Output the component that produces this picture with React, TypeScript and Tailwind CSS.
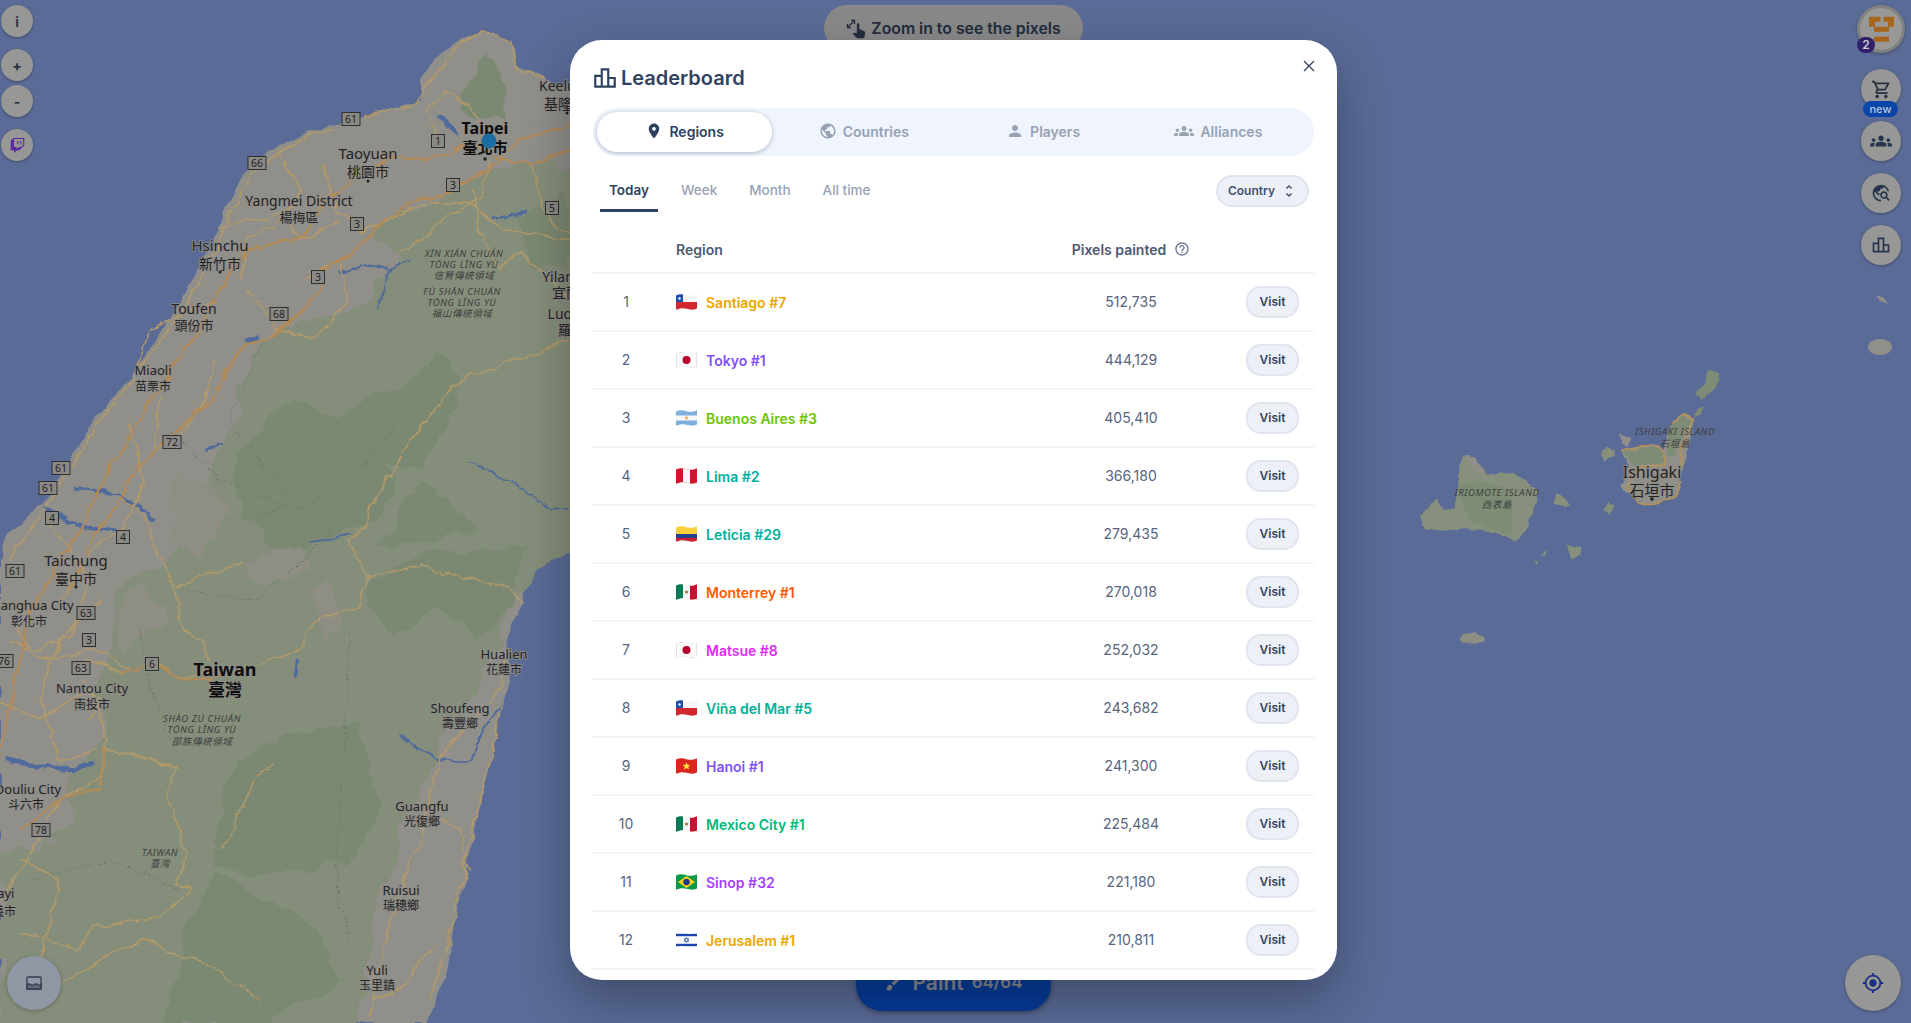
import React, { useId } from "react";
import {
  MdBrush,
  MdGroups,
  MdLocationOn,
  MdMyLocation,
  MdOutlineHelpOutline,
  MdOutlineLeaderboard,
  MdOutlineShoppingCart,
  MdPerson,
  MdPinch,
  MdPublic,
  MdTravelExplore,
  MdUnfoldMore,
} from "react-icons/md";
import { FaTwitch } from "react-icons/fa";

const rows = [
  { rank: 1, flag: "cl", name: "Santiago #7", color: "text-[#eda600]", pixels: "512,735" },
  { rank: 2, flag: "jp", name: "Tokyo #1", color: "text-[#8050fa]", pixels: "444,129" },
  { rank: 3, flag: "ar", name: "Buenos Aires #3", color: "text-[#6bc400]", pixels: "405,410" },
  { rank: 4, flag: "pe", name: "Lima #2", color: "text-[#00b09b]", pixels: "366,180" },
  { rank: 5, flag: "co", name: "Leticia #29", color: "text-[#00b09b]", pixels: "279,435" },
  { rank: 6, flag: "mx", name: "Monterrey #1", color: "text-[#ff5a00]", pixels: "270,018" },
  { rank: 7, flag: "jp", name: "Matsue #8", color: "text-[#e12afb]", pixels: "252,032" },
  { rank: 8, flag: "cl", name: "Viña del Mar #5", color: "text-[#00b09b]", pixels: "243,682" },
  { rank: 9, flag: "vn", name: "Hanoi #1", color: "text-[#8050fa]", pixels: "241,300" },
  { rank: 10, flag: "mx", name: "Mexico City #1", color: "text-[#00b877]", pixels: "225,484" },
  { rank: 11, flag: "br", name: "Sinop #32", color: "text-[#a63fff]", pixels: "221,180" },
  { rank: 12, flag: "il", name: "Jerusalem #1", color: "text-[#eda600]", pixels: "210,811" },
];

function Flag({ code }: { code: string }) {
  const id = useId();
  return (
    <svg viewBox="0 0 21 16" className="h-4 w-[21px] shrink-0">
      <defs>
        <clipPath id={id}>
          <path d="M0 1.5C4-.2 7 .2 10.5 1.2S17 2 21 .2V14.5C17 16.2 14 15.8 10.5 14.8S4 14 0 15.8Z" />
        </clipPath>
      </defs>
      <g clipPath={`url(#${id})`}>
        {code === "cl" && (
          <>
            <rect width="21" height="8" fill="#f4f4f4" />
            <rect y="8" width="21" height="8" fill="#d0282e" />
            <rect width="7" height="8" fill="#1c4fa8" />
            <circle cx="3.5" cy="4.5" r="1.2" fill="#fff" />
          </>
        )}
        {code === "jp" && (
          <>
            <rect width="21" height="16" fill="#d6d6d6" />
            <rect x=".6" y="1" width="19.8" height="14" fill="#fbfbfb" />
            <circle cx="10.5" cy="8" r="4" fill="#b8002a" />
          </>
        )}
        {code === "ar" && (
          <>
            <rect width="21" height="16" fill="#7eb0de" />
            <rect y="5.5" width="21" height="5" fill="#f7f7f7" />
            <circle cx="10.5" cy="8" r="1.4" fill="#f2a93b" />
          </>
        )}
        {code === "pe" && (
          <>
            <rect width="21" height="16" fill="#d3142c" />
            <rect x="7" width="7" height="16" fill="#f8f8f8" />
          </>
        )}
        {code === "co" && (
          <>
            <rect width="21" height="8" fill="#f7cf3b" />
            <rect y="8" width="21" height="4" fill="#23408f" />
            <rect y="12" width="21" height="4" fill="#c9202f" />
          </>
        )}
        {code === "mx" && (
          <>
            <rect width="7" height="16" fill="#0b7a52" />
            <rect x="7" width="7" height="16" fill="#f6f6f6" />
            <rect x="14" width="7" height="16" fill="#c5122f" />
            <circle cx="10.5" cy="8" r="1.6" fill="#8f7a45" />
          </>
        )}
        {code === "vn" && (
          <>
            <rect width="21" height="16" fill="#d9251d" />
            <path d="M10.5 4.2l1.1 2.6 2.8.2-2.1 1.8.7 2.7-2.5-1.5-2.5 1.5.7-2.7L6.6 7l2.8-.2Z" fill="#ffe234" />
          </>
        )}
        {code === "br" && (
          <>
            <rect width="21" height="16" fill="#0d9a46" />
            <path d="M10.5 2L19 8l-8.5 6L2 8Z" fill="#f7d21e" />
            <circle cx="10.5" cy="8" r="3.2" fill="#1b3a8a" />
          </>
        )}
        {code === "il" && (
          <>
            <rect width="21" height="16" fill="#f8f8f8" />
            <rect y="1.8" width="21" height="2.4" fill="#1f45b0" />
            <rect y="11.8" width="21" height="2.4" fill="#1f45b0" />
            <path d="M10.5 5.4l2.3 3.9h-4.6ZM10.5 10.6l-2.3-3.9h4.6Z" fill="none" stroke="#1f45b0" strokeWidth=".6" />
          </>
        )}
      </g>
    </svg>
  );
}

const labelFont = "'Noto Sans','Noto Sans CJK TC',sans-serif";

type Lbl = [number, number, string, number?, string?];

const labels: Lbl[] = [
  [485, 134, "Taipei", 16, "b"],
  [485, 153, "臺北市", 15, "b"],
  [566, 91, "Keelung", 14],
  [565, 109, "基隆市", 14],
  [368, 159, "Taoyuan", 15],
  [368, 177, "桃園市", 14],
  [299, 206, "Yangmei District", 14],
  [299, 222, "楊梅區", 13],
  [220, 251, "Hsinchu", 15],
  [220, 269, "新竹市", 14],
  [194, 314, "Toufen", 14],
  [194, 330, "頭份市", 13],
  [558, 282, "Yilan", 14],
  [573, 298, "宜蘭市", 14],
  [577, 319, "Luodong", 14],
  [579, 335, "羅東鎮", 14],
  [153, 375, "Miaoli", 13],
  [153, 391, "苗栗市", 12],
  [76, 566, "Taichung", 15],
  [76, 584, "臺中市", 14],
  [29, 610, "Changhua City", 13],
  [29, 626, "彰化市", 12],
  [225, 676, "Taiwan", 18, "b"],
  [225, 696, "臺灣", 17, "b"],
  [92, 693, "Nantou City", 13],
  [92, 709, "南投市", 12],
  [504, 659, "Hualien", 13],
  [504, 674, "花蓮市", 12],
  [460, 713, "Shoufeng", 13],
  [460, 728, "壽豐鄉", 12],
  [28, 794, "Douliu City", 13],
  [26, 809, "斗六市", 12],
  [422, 811, "Guangfu", 13],
  [422, 826, "光復鄉", 12],
  [401, 895, "Ruisui", 13],
  [401, 910, "瑞穗鄉", 12],
  [377, 975, "Yuli", 13],
  [377, 990, "玉里鎮", 12],
  [-4, 898, "Chiayi", 13],
  [-2, 916, "嘉義市", 12],
  [1652, 478, "Ishigaki", 16],
  [1652, 496, "石垣市", 15],
];

const areaLabels: Lbl[] = [
  [464, 257, "XĪN XIÁN CHUÁN"],
  [464, 268, "TŌNG LǏNG YÙ"],
  [464, 279, "信賢傳統領域"],
  [462, 295, "FÙ SHĀN CHUÁN"],
  [462, 306, "TŌNG LǏNG YÙ"],
  [462, 317, "福山傳統領域"],
  [202, 722, "SHÀO ZÚ CHUÁN"],
  [202, 733, "TŌNG LǏNG YÙ"],
  [202, 745, "邵族傳統領域"],
  [160, 856, "TAIWAN"],
  [160, 867, "臺灣"],
  [1497, 496, "IRIOMOTE ISLAND"],
  [1497, 508, "西表島"],
  [1675, 435, "ISHIGAKI ISLAND"],
  [1675, 447, "石垣島"],
];

const shields: [number, number, string][] = [
  [351, 119, "61"],
  [257, 163, "66"],
  [438, 141, "1"],
  [453, 185, "3"],
  [552, 208, "5"],
  [357, 224, "3"],
  [318, 277, "3"],
  [279, 314, "68"],
  [172, 442, "72"],
  [61, 468, "61"],
  [48, 488, "61"],
  [52, 518, "4"],
  [123, 537, "4"],
  [15, 571, "61"],
  [86, 613, "63"],
  [89, 640, "3"],
  [4, 661, "76"],
  [81, 668, "63"],
  [152, 664, "6"],
  [41, 830, "78"],
];

const lightRoads = [
  "364,117 410,103 440,70 460,42 490,31 513,48 517,66 545,80",
  "330,125 280,150 248,180 222,230 195,290 165,340 135,370 95,430 50,500 10,560",
  "568,340 452,384 397,462 350,545 368,577 419,566 510,588 524,601",
  "368,577 357,606 313,619 299,649 262,667 226,671 175,675 153,664 124,675 87,658",
  "175,588 182,636 204,640 208,662",
  "244,564 197,577 175,588 160,555 150,520 120,500",
  "104,749 175,769 167,802 186,850 175,884 193,889 157,919 98,924 76,950 22,932",
  "503,706 481,797 466,863 452,928 430,1000",
  "510,645 499,688 441,758 422,828 379,958 371,1019",
  "323,165 340,210 360,230 400,215 440,200 470,205 500,230 570,240",
  "300,280 340,260 350,300 310,340 280,330 250,290",
  "218,227 280,215 300,240 340,220",
  "100,600 60,640 40,700 60,760 100,749",
  "0,700 40,720 90,690 105,740 100,780 60,800 40,840 0,900",
  "473,190 480,230 500,270 520,250 570,300",
  "40,1000 100,960 140,940 200,960 260,1000",
  "430,950 400,990 372,1000",
  "440,140 425,110 445,90 470,105 480,125",
  "490,160 480,200 450,215 420,240 400,250",
  "530,165 545,210 570,235",
  "275,150 300,190 280,220 250,240 240,280",
  "135,370 150,330 190,310 220,300",
  "130,420 145,480 120,530 85,560 60,600",
  "50,520 90,580 70,640 30,650 10,620",
  "160,400 155,450 175,440 205,400 215,360",
  "10,640 50,660 95,650 130,670",
  "88,720 100,700 80,680",
  "20,860 60,880 40,960 15,1000",
  "225,850 250,790 270,760",
  "440,820 460,830 470,870",
];

const mainRoads = [
  "570,150 530,165 500,155 470,145 430,158 385,160 350,180 330,200 300,238 250,250 225,280 205,320 170,370 140,420 110,470 85,520 60,560 30,610 10,700 0,760",
  "570,125 520,140 480,175 440,195 410,205 380,222 350,255 323,270 322,290 280,330 240,350 210,400 150,455 100,530 70,590",
  "124,675 150,665 175,675 208,680 226,671",
  "104,749 100,790 60,800 20,830",
];

const rivers: [string, number][] = [
  ["7,762 55,769 95,765", 4],
  ["73,488 117,495 157,519", 3],
  ["42,508 87,527 117,530", 3],
  ["397,736 437,760 466,758 503,706", 2.5],
  ["310,542 350,534", 2.5],
  ["293,675 295,658", 4],
  ["437,118 459,133", 4],
  ["492,220 510,213 528,213", 3],
  ["340,273 365,268 386,272", 2.5],
  ["260,335 245,345", 4],
  ["470,462 500,475 528,492 545,505 568,508", 1.5],
  ["205,450 225,440", 3],
  ["410,260 385,275 375,310", 1.5],
];

const dotted = [
  "262,340 230,420 290,500 240,530",
  "170,430 220,480 300,510 340,490 400,420",
  "180,590 260,600 340,520",
  "140,630 150,690 170,740",
  "350,620 345,760 335,860 350,950",
  "30,880 110,860 180,890",
];

// base map is drawn already dimmed by the modal backdrop
function MapLayer() {
  return (
    <svg className="absolute inset-0 h-full w-full" viewBox="0 0 1911 1023">
      <defs>
        <filter id="rough" filterUnits="userSpaceOnUse" x="-20" y="-20" width="1951" height="1063">
          <feTurbulence type="fractalNoise" baseFrequency="0.035" numOctaves="3" seed="4" />
          <feDisplacementMap in="SourceGraphic" scale="12" xChannelSelector="R" yChannelSelector="G" />
        </filter>
        <filter id="roughSmall" filterUnits="userSpaceOnUse" x="-20" y="-20" width="1951" height="1063">
          <feTurbulence type="fractalNoise" baseFrequency="0.09" numOctaves="2" seed="9" />
          <feDisplacementMap in="SourceGraphic" scale="5" xChannelSelector="R" yChannelSelector="G" />
        </filter>
        <filter id="area" filterUnits="userSpaceOnUse" x="-20" y="-20" width="1951" height="1063">
          <feTurbulence type="fractalNoise" baseFrequency="0.025" numOctaves="4" seed="12" />
          <feDisplacementMap in="SourceGraphic" scale="30" xChannelSelector="R" yChannelSelector="G" />
          <feGaussianBlur stdDeviation=".6" />
        </filter>
      </defs>
      <g filter="url(#rough)">
        <path
          d="M490 31L515 50 517 63 543 78 600 100V500L570 514 528 566 524 601 506 636 510 671 503 706 488 775 477 819 466 876 455 924 448 971 426 1023H0V558L7 536 47 497 91 427 135 366 160 337 189 287 218 227 244 173 277 147 328 123 364 117 419 97 419 80 435 58 459 40Z"
          fill="#918f8a"
        />
      </g>
      <g filter="url(#area)">
        <path
          d="M600 165L520 160 470 190 400 213 382 233 400 263 362 300 290 330 262 340 226 427 171 558 109 601 98 680 102 732 73 775 69 819 36 845 0 862V1030H370L437 754 506 640 510 600 600 520Z"
          fill="#858e7a"
        />
        <path d="M510 645L490 720 445 770 425 840 395 930 378 1030H356L372 950 395 850 420 780 450 740 495 690Z" fill="#918f8a" />
        <g fill="#7b8972">
          <path d="M233 484L262 420 300 400 340 420 380 440 400 500 360 530 320 540 280 550 240 520Z" />
          <path d="M211 819L237 762 320 732 364 723 382 819 346 863 299 871 218 871Z" />
          <path d="M182 924L218 876 291 906 342 971 328 993 255 1030H157L186 971Z" />
          <path d="M364 584L437 549 528 545 510 614 473 640 437 610 393 636 364 610Z" />
          <path d="M371 545L430 484 473 523 430 540Z" />
          <path d="M335 414L400 390 440 350 470 380 420 470 350 440Z" />
          <path d="M460 90L490 60 510 90 500 125 470 115Z" />
          <path d="M520 220L570 190V270L530 260Z" />
        </g>
        <g fill="#8e8e85">
          <path d="M310 600L335 585 345 610 325 640Z" />
          <path d="M180 470L230 510 200 560 170 530Z" />
          <path d="M240 560L300 540 310 570 250 585Z" />
          <path d="M110 610L150 590 165 620 120 650Z" />
        </g>
      </g>
      <g fill="none" strokeLinejoin="round" filter="url(#roughSmall)">
        <g filter="url(#rough)">
          {dotted.map((d) => (
            <polyline key={d} points={d} stroke="#6e7668" strokeWidth="1" strokeDasharray="2 2" />
          ))}
          {rivers.map(([d, w]) => (
            <polyline key={d} points={d} stroke="#506a9c" strokeWidth={w} />
          ))}
          {lightRoads.map((d) => (
            <polyline key={d} points={d} stroke="#b39a68" strokeWidth="1.5" />
          ))}
          {mainRoads.map((d) => (
            <polyline key={d} points={d} stroke="#b58a55" strokeWidth="2.2" />
          ))}
        </g>
      </g>
      {/* islands */}
      <g filter="url(#roughSmall)">
        <g transform="translate(1400 340) scale(.3333)">
          <path
            d="M60 530L85 500 110 475 130 510 165 505 180 380 195 345 225 350 265 405 340 395 410 450 410 490 375 575 345 605 290 580 200 565 130 572 75 565Z"
            fill="#87907d"
          />
          <path d="M210 545L170 440 240 420 340 450 335 590 290 570Z" fill="#7f8c75" />
          <path d="M195 345L225 350 255 395 225 400Z" fill="#918f8a" />
          <path d="M460 490L470 462 495 475 510 495 495 505Z" fill="#87907d" />
          <path d="M612 510L622 485 640 500 630 522Z" fill="#87907d" />
          <path d="M498 615L545 622 540 645 518 658Z" fill="#87907d" />
          <path d="M425 645L442 628 435 648ZM405 662L418 660 414 675Z" fill="#87907d" />
          <ellipse cx="216" cy="895" rx="36" ry="16" fill="#8c9082" />
          <path d="M603 345L620 320 645 330 640 350 615 365Z" fill="#87907d" />
          <path d="M660 280L695 295 685 325 665 310Z" fill="#918f8a" />
          <path
            d="M660 440L690 380 665 335 700 325 760 315 790 330 815 250 855 225 880 240 870 310 850 370 835 465 740 495 700 470Z"
            fill="#918f8a"
          />
          <path d="M670 335L760 320 790 335 790 370 700 375Z" fill="#7f8c75" />
          <path d="M810 255L855 232 875 245 840 300 820 355 800 340Z" fill="#7f8c75" />
          <path d="M925 88L958 100 950 145 905 180 885 160 920 125Z" fill="#7f8c75" />
          <path d="M890 205L915 195 905 225 882 235Z" fill="#7f8c75" />
          <path
            d="M665 335L700 325 760 315 790 330 795 375 720 380 690 420 680 440 720 490 745 495 830 470 845 420M815 250L855 225 880 240 845 320 840 380"
            fill="none"
            stroke="#b0925f"
            strokeWidth="6"
          />
        </g>
      </g>
      <ellipse cx="1880" cy="347" rx="12" ry="8" fill="#918f8a" />
      <path d="M1876 295L1884 298 1888 304 1880 301Z" fill="#918f8a" />
      {/* labels */}
      <g style={{ fontFamily: labelFont }} textAnchor="middle">
        {labels.map(([x, y, t, size, w]) => (
          <text
            key={t + x}
            x={x}
            y={y}
            fontSize={size}
            fontWeight={w === "b" ? 700 : 400}
            fill={w === "b" ? "#0e0e10" : "#232327"}
            stroke="#8f8d88"
            strokeWidth="1.6"
            paintOrder="stroke"
          >
            {t}
          </text>
        ))}
        {areaLabels.map(([x, y, t]) => (
          <text key={t + x + y} x={x} y={y} fontSize="9.5" fontStyle="italic" letterSpacing=".6" fill="#3c4040">
            {t}
          </text>
        ))}
        {shields.map(([x, y, t]) => (
          <g key={t + x}>
            <rect x={x - (t.length > 1 ? 9 : 6.5)} y={y - 6.5} width={t.length > 1 ? 18 : 13} height="13" fill="#8b8985" stroke="#2f2f30" strokeWidth="1" />
            <text x={x} y={y + 4} fontSize="10.5" fill="#222">
              {t}
            </text>
          </g>
        ))}
        <g fill="#222">
          <circle cx="485" cy="159" r="1.8" />
          <circle cx="368" cy="181" r="1.5" />
          <circle cx="220" cy="272" r="1.5" />
          <circle cx="76" cy="587" r="1.5" />
          <circle cx="1652" cy="499" r="1.8" />
          <circle cx="567" cy="113" r="1.5" />
        </g>
      </g>
      <circle cx="489" cy="141" r="7.5" fill="#196da4" />
    </svg>
  );
}

function RoundButton({ className, children }: { className: string; children: React.ReactNode }) {
  return (
    <div className={`absolute flex items-center justify-center rounded-full bg-[#979795] shadow-[0_1px_3px_rgba(0,0,0,0.3)] ${className}`}>
      {children}
    </div>
  );
}

export default function App() {
  return (
    <div className="relative h-[1023px] w-[1911px] overflow-hidden bg-[#5a6b97] font-['Inter','Noto_Sans',sans-serif]">
      <MapLayer />

      {/* left controls */}
      <RoundButton className="left-px top-[5px] size-8 text-[14px] font-semibold text-[#26303f]">i</RoundButton>
      <RoundButton className="left-px top-[49px] size-8 text-[14px] font-bold text-[#26303f]">+</RoundButton>
      <RoundButton className="left-px top-[85px] size-8 text-[14px] font-bold text-[#26303f]">-</RoundButton>
      <RoundButton className="left-px top-[129px] size-8">
        <FaTwitch className="size-[15px] text-[#5a2aa0]" />
      </RoundButton>
      <div className="absolute left-[7px] top-[956px] flex size-[54px] items-center justify-center rounded-full bg-[#8e97a3] shadow-[0_1px_4px_rgba(0,0,0,0.25)]">
        <svg viewBox="0 0 16 16" className="size-4" fill="none" stroke="#333c4c" strokeWidth="1.3">
          <rect x="1" y="2" width="14" height="12" rx="1" />
          <path d="M1 9.5q1.7-1.4 3.5 0t3.5 0 3.5 0 3.5 0V14H1Z" fill="#5f6875" />
        </svg>
      </div>

      {/* right controls */}
      <RoundButton className="left-[1857px] top-[5px] size-12 border-[3px] border-[#81827f] bg-[#989897]">
        <svg viewBox="0 0 42 42" className="size-[42px]" fill="#a5651d">
          <path d="M9 8.700h11.500v5H15v5H9ZM23.500 8.700H34v10h-6v-5h-4.500ZM14 18.700h15v5H14ZM14 28.700h15v5H14Z" />
        </svg>
      </RoundButton>
      <div className="absolute left-[1857px] top-[37px] flex h-4 w-[18px] items-center justify-center rounded-full bg-[#32206a] text-[12px] font-semibold text-[#c9cbd6]">
        2
      </div>
      <RoundButton className="left-[1861px] top-[69px] size-10">
        <MdOutlineShoppingCart className="size-[21px] text-[#262f3f]" />
      </RoundButton>
      <div className="absolute left-[1863px] top-[101px] flex h-4 w-[35px] items-center justify-center rounded-full bg-[#0a46a8] text-[11px] font-medium text-[#b9c6dc]">
        new
      </div>
      <RoundButton className="left-[1861px] top-[121px] size-10">
        <MdGroups className="size-[22px] text-[#26354e]" />
      </RoundButton>
      <RoundButton className="left-[1861px] top-[173px] size-10">
        <MdTravelExplore className="size-5 text-[#26354e]" />
      </RoundButton>
      <RoundButton className="left-[1861px] top-[225px] size-10">
        <MdOutlineLeaderboard className="size-5 text-[#26354e]" />
      </RoundButton>
      <RoundButton className="left-[1845px] top-[955px] size-14">
        <MdMyLocation className="size-[22px] text-[#1a2f80]" />
      </RoundButton>

      {/* pill above the map */}
      <div className="absolute left-[824px] top-[5px] flex h-[46px] w-[259px] items-center justify-center gap-[5px] rounded-full bg-[#89898a] pt-0.5 text-[15.8px] font-semibold text-[#222c3c]">
        <MdPinch className="size-5" />
        Zoom in to see the pixels
      </div>

      {/* paint button */}
      <div className="absolute left-[856px] top-[955px] flex h-[56px] w-[195px] items-center justify-center gap-2 rounded-[26px] bg-[#063c9a] text-[#8a8d92] shadow-[0_2px_5px_rgba(0,0,0,0.35)]">
        <MdBrush className="size-5" />
        <span className="text-[21px] font-semibold">Paint</span>
        <span className="text-[17px] font-semibold">64/64</span>
      </div>

      {/* modal */}
      <div className="absolute left-[570px] top-10 h-[940px] w-[767px] overflow-hidden rounded-[32px] bg-white px-[23px] pt-6 shadow-[0_20px_50px_rgba(0,0,0,0.3)]">
        <button className="absolute right-[22px] top-[20px] text-[#2e3f5c]">
          <svg viewBox="0 0 12 12" className="size-3" fill="none" stroke="currentColor" strokeWidth="1.2">
            <path d="M1 1l10 10M11 1L1 11" />
          </svg>
        </button>
        <div className="flex h-7 items-center gap-[7px] text-[20px] font-semibold text-[#2f4262]">
          <MdOutlineLeaderboard className="size-[26px] -ml-[1px]" />
          <span className="-ml-[4px]">Leaderboard</span>
        </div>

        <div className="mt-4 grid h-12 grid-cols-4 gap-1 rounded-[24px] bg-[#eff4fd] p-1 text-[14px] font-semibold text-[#98a2b3]">
          <div className="flex items-center justify-center gap-1.5 rounded-[20px] bg-white pb-[2px] text-[#2f4262] shadow-[0_1px_4px_rgba(47,66,98,0.35)]">
            <MdLocationOn className="size-[18px]" />
            Regions
          </div>
          <div className="flex items-center justify-center gap-1.5 pb-[2px]">
            <MdPublic className="size-[18px]" />
            Countries
          </div>
          <div className="flex items-center justify-center gap-1.5 pb-[2px]">
            <MdPerson className="size-[18px]" />
            Players
          </div>
          <div className="flex items-center justify-center gap-1.5 pb-[2px] pr-2">
            <MdGroups className="size-[20px]" />
            Alliances
          </div>
        </div>

        <div className="mt-[14px] flex items-center justify-between pl-[7px] pr-[5px]">
          <div className="flex gap-[14px] text-[13.5px] font-medium text-[#98a2b3]">
            <div className="h-[42px] border-b-[3px] border-[#2f4262] px-[9px] pt-[10px] font-semibold text-[#2f4262]">Today</div>
            <div className="h-[42px] px-[9px] pt-[10px]">Week</div>
            <div className="h-[42px] px-[9px] pt-[10px]">Month</div>
            <div className="h-[42px] px-[9px] pt-[10px]">All time</div>
          </div>
          <button className="flex h-8 w-[93px] items-center justify-center gap-1.5 rounded-full border-2 border-[#dfe4ee] bg-[#edf0f7] text-[12px] font-semibold text-[#44536f]">
            Country
            <MdUnfoldMore className="size-4" />
          </button>
        </div>

        <div className="grid h-[62px] grid-cols-[83px_1fr_150px_108px] items-center border-b-2 border-[#f3f4f6] pt-[14px] text-[14px] font-semibold text-[#4b5a75]">
          <div />
          <div>Region</div>
          <div className="flex items-center justify-center gap-2">
            Pixels painted
            <MdOutlineHelpOutline className="size-4 text-[#6b7890]" />
          </div>
          <div />
        </div>

        {rows.map((row) => (
          <div
            key={row.rank}
            className="grid h-[58px] grid-cols-[83px_1fr_150px_108px] items-center border-b-2 border-[#f3f4f6] text-[14px] text-[#56647d]"
          >
            <div className="w-[66px] pb-0.5 text-center">{row.rank}</div>
            <div className="flex items-center gap-[9px]">
              <Flag code={row.flag} />
              <span className={`mt-px font-semibold ${row.color}`}>{row.name}</span>
            </div>
            <div className="pb-0.5 text-center">{row.pixels}</div>
            <div className="pl-10">
              <button className="flex h-8 w-[53px] items-center justify-center rounded-[15px] border-2 border-[#dfe4ee] bg-[#edf0f7] text-[12px] font-semibold text-[#34435e]">
                Visit
              </button>
            </div>
          </div>
        ))}
      </div>
    </div>
  );
}
